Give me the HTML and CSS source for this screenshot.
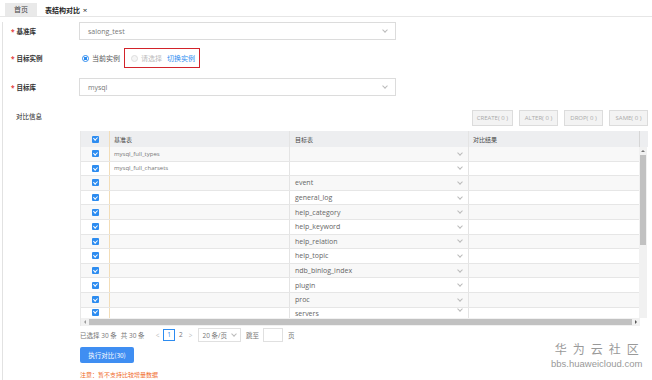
FILE: index.html
```html
<!DOCTYPE html>
<html lang="zh-CN">
<head>
    <meta charset="UTF-8">
    <meta name="viewport" content="width=device-width, initial-scale=1.0">
    <title>表结构对比</title>
    <link rel="stylesheet" href="styles.css">
</head>
<body>
    <div class="tc-tabs">
        <div class="tc-tab">首页</div>
        <div class="tc-tab tc-tab-active">表结构对比 <span class="tc-close">×</span></div>
    </div>

    <div class="tc-main">
        <div class="tc-row tc-row-first">
            <div class="tc-label"><span class="tc-star">*</span>基准库</div>
            <div class="tc-select">salong_test<span class="tc-arrow"></span></div>
        </div>

        <div class="tc-row tc-row-instance">
            <div class="tc-label"><span class="tc-star">*</span>目标实例</div>
            <div class="tc-radio-group">
                <span class="tc-radio tc-radio-on"></span>
                <span class="tc-radio-text">当前实例</span>
                <div class="tc-highlight">
                    <span class="tc-radio tc-radio-off"></span>
                    <span class="tc-radio-text tc-muted">请选择</span>
                    <a class="tc-link">切换实例</a>
                </div>
            </div>
        </div>

        <div class="tc-row tc-row-db">
            <div class="tc-label"><span class="tc-star">*</span>目标库</div>
            <div class="tc-select">mysql<span class="tc-arrow"></span></div>
        </div>

        <div class="tc-row tc-row-info">
            <div class="tc-label tc-label-plain">对比信息</div>
            <div class="tc-info">
                <div class="tc-filters">
                    <button class="tc-filter">CREATE( 0 )</button>
                    <button class="tc-filter">ALTER( 0 )</button>
                    <button class="tc-filter">DROP( 0 )</button>
                    <button class="tc-filter">SAME( 0 )</button>
                </div>

                <div class="tc-table">
                    <div class="tc-head">
                        <div class="tc-cell tc-col-check"><span class="tc-check"></span></div>
                        <div class="tc-cell tc-col-base">基准表</div>
                        <div class="tc-cell tc-col-target">目标表</div>
                        <div class="tc-cell tc-col-result">对比结果</div>
                        <div class="tc-cell tc-col-gutter"></div>
                    </div>
                    <div class="tc-body-wrap">
                        <div class="tc-body" id="tc-body"></div>
                        <div class="tc-vscroll">
                            <span class="tc-vscroll-up"></span>
                            <span class="tc-vscroll-thumb"></span>
                        </div>
                    </div>
                    <div class="tc-hscroll">
                        <span class="tc-hscroll-left"></span>
                        <span class="tc-hscroll-thumb"></span>
                        <span class="tc-hscroll-right"></span>
                    </div>
                </div>

                <div class="tc-pager">
                    <span class="tc-pager-text">已选择 30 条</span>
                    <span class="tc-pager-text">共 30 条</span>
                    <span class="tc-pager-nav tc-prev">&lt;</span>
                    <span class="tc-page tc-page-on">1</span>
                    <span class="tc-page">2</span>
                    <span class="tc-pager-nav">&gt;</span>
                    <span class="tc-size">20 条/页<span class="tc-arrow"></span></span>
                    <span class="tc-pager-text">跳至</span>
                    <span class="tc-jump"></span>
                    <span class="tc-pager-text">页</span>
                </div>

                <button class="tc-run">执行对比(30)</button>
                <div class="tc-note">注意：暂不支持比较增量数据</div>
            </div>
        </div>
    </div>

    <div class="tc-watermark">
        <div class="tc-wm-title">华为云社区</div>
        <div class="tc-wm-url">bbs.huaweicloud.com</div>
    </div>

    <script>
        const tcRows = [
            ['mysql_full_types', ''],
            ['mysql_full_charsets', ''],
            ['', 'event'],
            ['', 'general_log'],
            ['', 'help_category'],
            ['', 'help_keyword'],
            ['', 'help_relation'],
            ['', 'help_topic'],
            ['', 'ndb_binlog_index'],
            ['', 'plugin'],
            ['', 'proc'],
            ['', 'servers']
        ];
        const tcBody = document.getElementById('tc-body');

        tcRows.forEach(([base, target]) => {
            const row = document.createElement('div');
            row.className = 'tc-tr';
            row.innerHTML =
                '<div class="tc-cell tc-col-check"><span class="tc-check"></span></div>' +
                '<div class="tc-cell tc-col-base tc-base-name">' + base + '</div>' +
                '<div class="tc-cell tc-col-target"><span>' + target + '</span><span class="tc-arrow"></span></div>' +
                '<div class="tc-cell tc-col-result"></div>';
            tcBody.appendChild(row);
        });
    </script>
</body>
</html>
```

FILE: styles.css
```css
body {
    margin: 0;
    background-color: #fff;
    font-family: "Open Sans", "Noto Sans CJK SC", sans-serif;
    color: #555;
    width: 652px;
    height: 380px;
    overflow: hidden;
    position: relative;
}

.tc-tabs {
    display: flex;
    align-items: flex-end;
    height: 16px;
    padding-left: 5px;
    border-bottom: 1px solid #e6e6e6;
}

.tc-tab {
    height: 13px;
    line-height: 13px;
    padding: 0 9px;
    font-size: 7px;
    background-color: #e9e9e9;
    color: #444;
    margin-right: 5px;
}

.tc-tab-active {
    background-color: #fff;
    color: #222;
    font-weight: bold;
    padding-left: 3px;
}

.tc-close {
    font-weight: normal;
    font-size: 8px;
    margin-left: 1px;
}

.tc-main {
    border-left: 1px solid #e2e2e2;
    margin-left: 2px;
    padding-right: 6px;
    height: 363px;
}

.tc-row {
    display: flex;
    align-items: center;
}

.tc-row-first {
    margin-top: 5px;
}

.tc-row-instance {
    margin-top: 8px;
}

.tc-row-db {
    margin-top: 10px;
}

.tc-row-info {
    margin-top: 15px;
    align-items: flex-start;
}

.tc-label {
    width: 76px;
    flex-shrink: 0;
    padding-left: 8px;
    box-sizing: border-box;
    font-size: 6.5px;
    font-weight: bold;
    color: #333;
}

.tc-label-plain {
    padding-left: 13px;
    padding-top: 0;
    font-weight: normal;
    color: #222;
}

.tc-star {
    color: #e4393c;
    margin-right: 2px;
}

.tc-select {
    width: 317px;
    height: 18px;
    box-sizing: border-box;
    border: 1px solid #dcdcdc;
    padding: 0 8px;
    display: flex;
    align-items: center;
    justify-content: space-between;
    font-size: 7px;
    color: #777;
}

.tc-arrow {
    width: 3px;
    height: 3px;
    border-right: 1px solid #bbb;
    border-bottom: 1px solid #bbb;
    transform: rotate(45deg);
    margin-top: -2px;
}

.tc-radio-group {
    display: flex;
    align-items: center;
    padding-left: 3px;
}

.tc-radio {
    width: 7px;
    height: 7px;
    border-radius: 50%;
    box-sizing: border-box;
    margin-right: 3px;
}

.tc-radio-on {
    border: 1px solid #2d8cf0;
    background: radial-gradient(circle, #2d8cf0 1.6px, #fff 2px);
}

.tc-radio-off {
    border: 1px solid #ddd;
    background-color: #f5f5f5;
}

.tc-radio-text {
    font-size: 7px;
    color: #555;
}

.tc-muted {
    color: #bbb;
    margin-right: 5px;
}

.tc-highlight {
    display: flex;
    align-items: center;
    height: 20px;
    width: 76px;
    box-sizing: border-box;
    border: 1px solid #d2232a;
    padding-left: 6px;
    margin-left: 4px;
}

.tc-link {
    font-size: 7px;
    color: #2d8cf0;
}

.tc-info {
    flex: 1;
    margin-top: -1px;
    margin-left: 1px;
}

.tc-filters {
    display: flex;
    justify-content: flex-end;
    gap: 6px;
}

.tc-filter {
    height: 16px;
    padding: 0 4px;
    min-width: 39px;
    border: 1px solid #dcdcdc;
    background-color: #f3f3f3;
    color: #aaa;
    font-family: "Open Sans", sans-serif;
    font-size: 6px;
}

.tc-table {
    margin-top: 5px;
    width: 567px;
    border-left: 1px solid #e8e8e8;
}

.tc-head {
    display: flex;
    height: 16px;
    background-color: #edeef0;
    font-size: 6px;
    color: #444;
}

.tc-cell {
    display: flex;
    align-items: center;
    box-sizing: border-box;
    height: 100%;
}

.tc-col-check {
    width: 29px;
    justify-content: center;
    border-right: 1px solid #f2ddb8;
}

.tc-col-base {
    width: 180px;
    padding-left: 4px;
    border-right: 1px solid #e4e4e4;
}

.tc-col-target {
    width: 179px;
    padding: 0 6px 0 5px;
    border-right: 1px solid #e4e4e4;
    justify-content: space-between;
}

.tc-col-result {
    width: 170px;
    padding-left: 4px;
}

.tc-col-gutter {
    width: 8px;
    border-left: 1px solid #d6d6d6;
}

.tc-check {
    width: 7px;
    height: 7px;
    border-radius: 1px;
    background-color: #2d8cf0;
    position: relative;
}

.tc-check::after {
    content: "";
    position: absolute;
    left: 2.3px;
    top: 0.8px;
    width: 1.5px;
    height: 3.2px;
    border-right: 1px solid #fff;
    border-bottom: 1px solid #fff;
    transform: rotate(45deg);
}

.tc-body-wrap {
    display: flex;
    height: 171px;
    overflow: hidden;
}

.tc-body {
    width: 558px;
}

.tc-tr {
    display: flex;
    height: 14.6px;
    border-bottom: 1px solid #e6e6e6;
    box-sizing: border-box;
    font-size: 7px;
    color: #666;
}

.tc-tr:nth-child(odd) {
    background-color: #f8f8f8;
}

.tc-tr:last-child .tc-cell {
    align-items: flex-start;
    padding-top: 1px;
}

.tc-base-name {
    font-size: 6px;
    color: #777;
}

.tc-vscroll {
    width: 8px;
    background-color: #f1f1f1;
    display: flex;
    flex-direction: column;
    align-items: center;
}

.tc-vscroll-up {
    width: 0;
    height: 0;
    border-left: 2px solid transparent;
    border-right: 2px solid transparent;
    border-bottom: 2px solid #777;
    margin: 3px 0 3px;
}

.tc-vscroll-thumb {
    width: 6px;
    height: 90px;
    background-color: #c1c1c1;
}

.tc-hscroll {
    display: flex;
    align-items: center;
    height: 8px;
    background-color: #f1f1f1;
    width: 559px;
}

.tc-hscroll-left,
.tc-hscroll-right {
    width: 0;
    height: 0;
    border-top: 2px solid transparent;
    border-bottom: 2px solid transparent;
    margin: 0 3px;
}

.tc-hscroll-left {
    border-right: 2px solid #999;
}

.tc-hscroll-right {
    border-left: 2px solid #555;
}

.tc-hscroll-thumb {
    flex: 1;
    height: 6px;
    background-color: #c1c1c1;
}

.tc-pager {
    display: flex;
    align-items: center;
    height: 14px;
    margin-top: 2px;
    font-size: 6.5px;
    color: #777;
}

.tc-pager-text {
    margin-right: 4px;
}

.tc-pager-nav {
    color: #bbb;
    margin: 0 3px;
}

.tc-prev {
    margin-left: 7px;
}

.tc-page {
    margin: 0 1px;
    padding: 0 2px;
    line-height: 10px;
}

.tc-page-on {
    border: 1px solid #2d8cf0;
    color: #2d8cf0;
    padding: 0 3px;
}

.tc-size {
    display: flex;
    align-items: center;
    gap: 5px;
    height: 14px;
    border: 1px solid #e0e0e0;
    padding: 0 4px;
    box-sizing: border-box;
    margin: 0 5px 0 2px;
}

.tc-jump {
    width: 20px;
    height: 14px;
    border: 1px solid #e0e0e0;
    box-sizing: border-box;
    margin-right: 5px;
}

.tc-run {
    display: block;
    margin-top: 5px;
    height: 16px;
    width: 54px;
    border: none;
    border-radius: 2px;
    background-color: #3f8ef2;
    color: #fff;
    font-family: "Noto Sans CJK SC", sans-serif;
    font-size: 6.5px;
    padding: 0;
}

.tc-note {
    margin-top: 7px;
    font-size: 6px;
    color: #f06a2a;
}

.tc-watermark {
    position: absolute;
    left: 551px;
    top: 342px;
    color: #999;
    text-align: center;
}

.tc-wm-title {
    font-size: 12px;
    letter-spacing: 6px;
    margin-right: -6px;
    line-height: 16px;
}

.tc-wm-url {
    font-family: "Liberation Sans", sans-serif;
    font-size: 9.5px;
    line-height: 12px;
}
```
